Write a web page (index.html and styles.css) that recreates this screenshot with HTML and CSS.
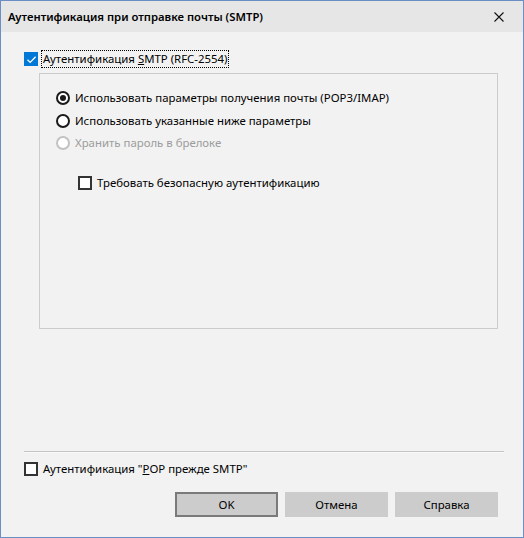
FILE: index.html
```html
<!DOCTYPE html>
<html lang="ru">
<head>
<meta charset="utf-8">
<title>Аутентификация при отправке почты (SMTP)</title>
<link rel="stylesheet" href="styles.css">
</head>
<body>
<div class="window">
  <div class="titlebar">
    <span class="title">Аутентификация при отправке почты (SMTP)</span>
    <svg class="close" width="10" height="10" viewBox="0 0 10 10"><path d="M0.5 0.5L9.5 9.5M9.5 0.5L0.5 9.5" stroke="#111" stroke-width="1.1" fill="none"/></svg>
  </div>
  <div class="content">
    <div class="row top-check">
      <span class="cb checked"><svg width="13" height="13" viewBox="0 0 13 13"><path d="M2.5 6.8L5.2 9.4L10.6 3.8" stroke="#fff" stroke-width="1.3" fill="none"/></svg></span>
      <span class="label focus">Аутентификация <u>S</u>MTP (RFC-2554)</span>
    </div>
    <div class="group">
      <div class="row radio-row">
        <span class="radio on"></span>
        <span class="label">Использовать параметры получения почты (POP3/IMAP)</span>
      </div>
      <div class="row radio-row">
        <span class="radio"></span>
        <span class="label">Использовать указанные ниже параметры</span>
      </div>
      <div class="row radio-row disabled">
        <span class="radio"></span>
        <span class="label">Хранить пароль в брелоке</span>
      </div>
      <div class="row secure">
        <span class="cb"></span>
        <span class="label">Требовать безопасную аутентификацию</span>
      </div>
    </div>
    <div class="spacer"></div>
    <div class="separator"></div>
    <div class="row pop-check">
      <span class="cb"></span>
      <span class="label">Аутентификация "<u>P</u>OP прежде SMTP"</span>
    </div>
    <div class="buttons">
      <button class="btn default">OK</button>
      <button class="btn">Отмена</button>
      <button class="btn">Справка</button>
    </div>
  </div>
</div>
</body>
</html>
```
FILE: styles.css
```css
* { box-sizing: border-box; }
html, body { margin: 0; padding: 0; }
body {
  width: 524px;
  height: 538px;
  font-family: "Noto Sans", "Segoe UI", sans-serif;
  font-size: 11.4px;
  color: #000;
  background: #f0f0f0;
}
.window {
  width: 524px;
  height: 538px;
  border: 1px solid #6b8fc4;
  display: flex;
  flex-direction: column;
  background: #f2f2f2;
}
.titlebar {
  height: 31px;
  flex: none;
  background: #e6e6e6;
  display: flex;
  align-items: center;
  justify-content: space-between;
  padding: 0 19px 0 7px;
}
.title {
  font-weight: 600;
  font-size: 11.3px;
  color: #000;
}
.close { display: block; margin-top: 1px; }
.content {
  flex: 1;
  display: flex;
  flex-direction: column;
  padding: 18px 25px 20px 23px;
}
.row {
  display: flex;
  align-items: center;
  height: 18px;
}
.label { white-space: nowrap; line-height: 16px; }
.label.focus {
  outline: 1px dotted #000;
  outline-offset: 0;
  padding: 0 1px;
  margin-left: 4px;
}
.cb {
  width: 14px;
  height: 14px;
  border: 2px solid #333;
  background: #fff;
  flex: none;
  margin-right: 5px;
  display: flex;
  align-items: center;
  justify-content: center;
}
.cb.checked {
  background: #0078d7;
  border: none;
  width: 14px;
  height: 14px;
  margin-right: 0;
}
.cb svg { display: block; }
.group {
  margin: 5px 0 0 15px;
  width: 459px;
  height: 256px;
  border: 1px solid #cccccc;
  padding: 13px 0 0 16px;
  flex: none;
}
.radio-row { height: 22px; }
.radio-row + .radio-row { margin-top: 0.5px; }
.radio {
  width: 14px;
  height: 14px;
  border-radius: 50%;
  border: 2px solid #1a1a1a;
  background: #fff;
  flex: none;
  margin-right: 5px;
  position: relative;
}
.radio.on::after {
  content: "";
  position: absolute;
  left: 2px;
  top: 2px;
  width: 6px;
  height: 6px;
  border-radius: 50%;
  background: #1a1a1a;
}
.disabled .radio { border-color: #c2c2c2; }
.disabled .label { color: #9c9c9c; }
.secure { margin: 20px 0 0 22px; }
.spacer { flex: 1; }
.separator {
  height: 2px;
  background: #c4c4c4;
  margin: 0 -6px 0 0;
  border-bottom: 1px solid #f8f8f8;
}
.pop-check { margin-top: 7px; margin-left: 0; }
.buttons {
  display: flex;
  justify-content: flex-end;
  gap: 7px;
  margin-top: 14px;
  margin-right: 0;
}
.btn {
  width: 103px;
  height: 25px;
  background: #cccccc;
  border: 2px solid #cccccc;
  font-family: inherit;
  font-size: 11.4px;
  color: #000;
  padding: 0;
}
.btn.default { border-color: #7a7a7a; }
```
